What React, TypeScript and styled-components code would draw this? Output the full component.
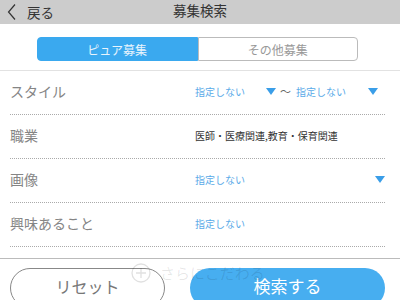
import React from "react";
import styled, { createGlobalStyle } from "styled-components";

const GlobalStyle = createGlobalStyle`
  html, body {
    margin: 0;
    padding: 0;
    background: #ffffff;
    overflow: hidden;
  }
  body {
    font-family: "Noto Sans CJK JP", "Noto Sans", sans-serif;
  }
`;

const Page = styled.div`
  position: relative;
  width: 400px;
  height: 300px;
  overflow: hidden;
`;

const Header = styled.div`
  height: 24px;
  background: #cccccc;
  display: grid;
  grid-template-columns: 1fr auto 1fr;
  align-items: center;
`;

const BackLink = styled.a`
  display: flex;
  align-items: center;
  gap: 11px;
  padding-left: 7px;
  font-size: 13.5px;
  color: #333333;
  text-decoration: none;
  line-height: 20px;
  margin-top: -1px;
`;

const Title = styled.div`
  font-size: 13.5px;
  color: #333333;
  line-height: 20px;
  margin-top: -4px;
`;

const Tabs = styled.div`
  display: flex;
  margin: 13px 0 0 37px;
  width: 321px;
  height: 24px;
`;

const Tab = styled.div<{ active?: boolean }>`
  flex: 1;
  display: flex;
  align-items: center;
  justify-content: center;
  font-size: 12px;
  box-sizing: border-box;
  background: ${(p) => (p.active ? "#3aa9ef" : "#ffffff")};
  color: ${(p) => (p.active ? "#e8f4fd" : "#999999")};
  border: 1px solid ${(p) => (p.active ? "#3aa9ef" : "#bbbbbb")};
  border-radius: ${(p) => (p.active ? "4px 0 0 4px" : "0 4px 4px 0")};
`;

const List = styled.div`
  margin-top: 9px;
  border-top: 1px solid #e2e2e2;
`;

const Row = styled.div`
  height: 44px;
  box-sizing: border-box;
  padding-bottom: 3px;
  margin: 0 15px 0 10px;
  display: flex;
  align-items: center;
  border-bottom: 1px dotted #aaaaaa;
`;

const Label = styled.div`
  width: 185px;
  font-size: 14px;
  color: #858585;
`;

const Values = styled.div`
  flex: 1;
  display: flex;
  align-items: center;
`;

const Select = styled.div<{ width?: number }>`
  display: flex;
  align-items: center;
  justify-content: space-between;
  width: ${(p) => (p.width ? `${p.width}px` : "100%")};
  font-size: 10px;
  color: #5aaae8;
`;

const PlainValue = styled.div<{ dark?: boolean }>`
  font-size: 10px;
  color: ${(p) => (p.dark ? "#333333" : "#5aaae8")};
`;

const Tilde = styled.span`
  font-size: 11px;
  color: #666666;
  margin: 0 5px 0 4px;
`;

const Caret = styled.span`
  width: 0;
  height: 0;
  border-left: 5px solid transparent;
  border-right: 5px solid transparent;
  border-top: 7px solid #3a9ee8;
  margin-top: 1px;
`;

const Divider = styled.div`
  margin-top: 11px;
  border-top: 1px solid #bbbbbb;
`;

const Footer = styled.div`
  display: flex;
  gap: 25px;
  margin: 9px 15px 0 10px;
`;

const Button = styled.button<{ primary?: boolean }>`
  height: 40px;
  box-sizing: border-box;
  border-radius: 20px;
  font-family: inherit;
  font-size: ${(p) => (p.primary ? "17px" : "16px")};
  padding: 0 0 5px;
  cursor: pointer;
  background: ${(p) => (p.primary ? "#47aef0" : "#ffffff")};
  color: ${(p) => (p.primary ? "#ffffff" : "#777777")};
  border: ${(p) => (p.primary ? "none" : "1px solid #888888")};
  width: ${(p) => (p.primary ? "195px" : "155px")};
`;

const MoreLink = styled.div`
  position: absolute;
  left: 131px;
  top: 262px;
  display: flex;
  align-items: center;
  gap: 9px;
  font-size: 15px;
  color: rgba(0, 0, 0, 0.1);
  pointer-events: none;
`;

const Chevron = () => (
  <svg width="9" height="16" viewBox="0 0 9 16">
    <path d="M8 0.5 L1.5 8 L8 15.5" fill="none" stroke="#333" strokeWidth="1.2" />
  </svg>
);

const PlusCircle = () => (
  <svg width="20" height="20" viewBox="0 0 20 20">
    <circle cx="10" cy="10" r="9" fill="none" stroke="rgba(0,0,0,0.12)" strokeWidth="1.3" />
    <path d="M10 5 V15 M5 10 H15" stroke="rgba(0,0,0,0.12)" strokeWidth="1.3" />
  </svg>
);

export default function App() {
  return (
    <Page>
      <GlobalStyle />
      <Header>
        <BackLink>
          <Chevron />
          戻る
        </BackLink>
        <Title>募集検索</Title>
        <div />
      </Header>

      <Tabs>
        <Tab active>ピュア募集</Tab>
        <Tab>その他募集</Tab>
      </Tabs>

      <List>
        <Row>
          <Label>スタイル</Label>
          <Values>
            <Select width={81}>
              指定しない
              <Caret />
            </Select>
            <Tilde>〜</Tilde>
            <Select width={82}>
              指定しない
              <Caret />
            </Select>
          </Values>
        </Row>
        <Row>
          <Label>職業</Label>
          <Values>
            <PlainValue dark>医師・医療関連,教育・保育関連</PlainValue>
          </Values>
        </Row>
        <Row>
          <Label>画像</Label>
          <Values>
            <Select>
              指定しない
              <Caret />
            </Select>
          </Values>
        </Row>
        <Row>
          <Label>興味あること</Label>
          <Values>
            <PlainValue>指定しない</PlainValue>
          </Values>
        </Row>
      </List>

      <Divider />

      <Footer>
        <Button>リセット</Button>
        <Button primary>検索する</Button>
      </Footer>

      <MoreLink>
        <PlusCircle />
        さらにこだわる
      </MoreLink>
    </Page>
  );
}
